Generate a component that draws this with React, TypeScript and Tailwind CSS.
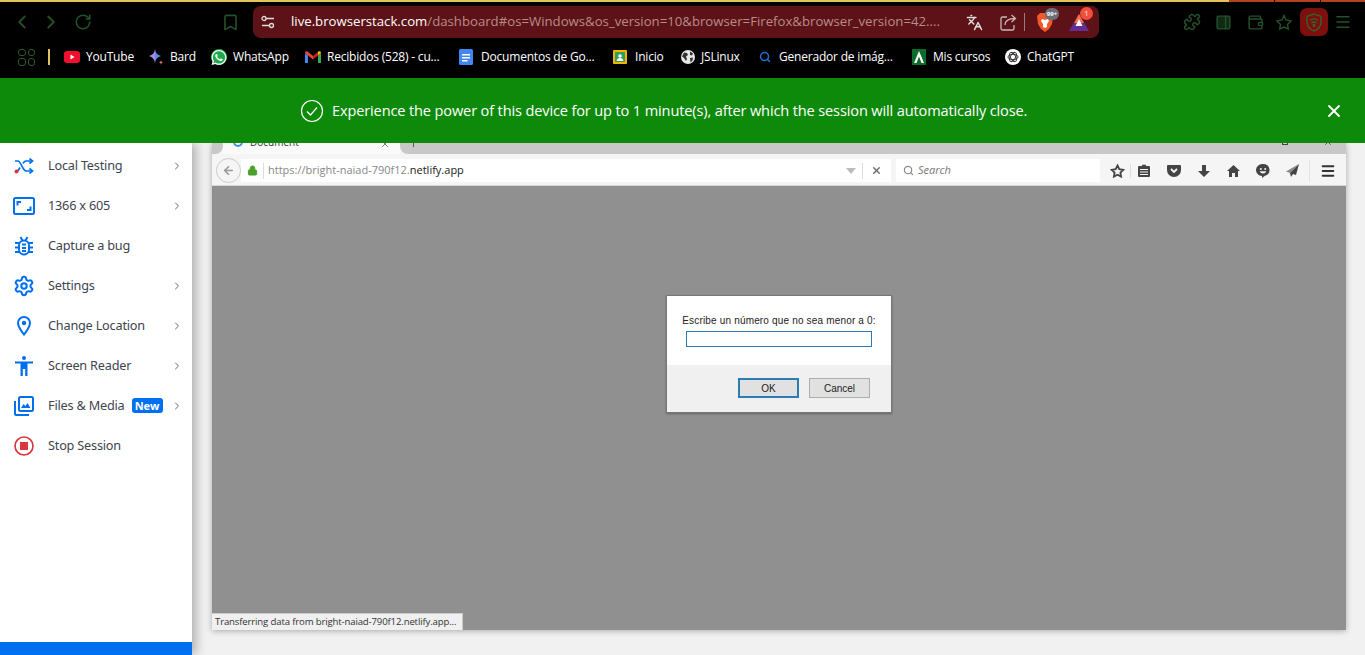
import { ChevronLeft, ChevronRight, RotateCw, Bookmark, Languages, Puzzle, PanelRight, Wallet, Menu, X, Settings, Lock, ArrowLeft, Search } from 'lucide-react'
import { FaWhatsapp } from 'react-icons/fa'

const dimGreen = '#24502a'
const blue = '#0070f0'
const tool = '#444'

function YouTubeIcon() {
  return (
    <svg width="16" height="16" viewBox="0 0 16 16">
      <rect x="0" y="2" width="16" height="12" rx="3" fill="#f00f2f" />
      <path d="M6.5 5.5v5l4-2.5z" fill="#fff" />
    </svg>
  )
}

function BardIcon() {
  return (
    <svg width="16" height="17" viewBox="0 0 16 17">
      <path d="M7 0c.6 4 2.4 6 6 7-3.6 1-5.4 3-6 7z" fill="#5b8de8" />
      <path d="M7 0c-.6 4-2.4 6-6 7 3.6 1 5.4 3 6 7z" fill="#a98ae0" />
      <path d="M13 11c.2 1.400.8 2 2 2.400-1.200.4-1.800 1-2 2.400-.2-1.400-.8-2-2-2.400 1.200-.4 1.800-1 2-2.400z" fill="#d96570" />
    </svg>
  )
}

function WhatsAppIcon() {
  return (
    <div className="w-[16px] h-[16px] rounded-full bg-[#1faa4c] flex items-center justify-center">
      <FaWhatsapp size={17} color="#fff" />
    </div>
  )
}

function GmailIcon() {
  return (
    <svg width="16" height="14" viewBox="0 0 16 14">
      <path d="M0 3v10h3V5.500z" fill="#4285f4" />
      <path d="M13 5.500V13h3V3z" fill="#34a853" />
      <path d="M0 3l3 2.500L8 9.500V6L3 1.800C1.600.8 0 1.500 0 3z" fill="#ea4335" />
      <path d="M8 6v3.500l5-4V1.800z" fill="#c5221f" />
      <path d="M13 1.800v3.700l3-2.500c0-1.500-1.600-2.200-3-1.200z" fill="#fbbc04" />
    </svg>
  )
}

function DocsIcon() {
  return (
    <svg width="14" height="16" viewBox="0 0 14 16">
      <rect width="14" height="16" rx="1.500" fill="#4285f4" />
      <path d="M3 5h8v1.500H3zM3 8h8v1.500H3zM3 11h5.500v1.500H3z" fill="#fff" />
    </svg>
  )
}

function ClassroomIcon() {
  return (
    <svg width="14" height="14" viewBox="0 0 14 14">
      <rect width="14" height="14" rx="1" fill="#f4b400" />
      <rect x="2" y="2" width="10" height="10" fill="#2f9e5b" />
      <circle cx="7" cy="6" r="1.800" fill="#fff" />
      <path d="M3.500 11c.4-2 1.800-3 3.500-3s3.100 1 3.500 3z" fill="#fff" />
    </svg>
  )
}

function GlobeIcon() {
  return (
    <svg width="14" height="14" viewBox="0 0 14 14">
      <circle cx="7" cy="7" r="7" fill="#e8e8e8" />
      <path d="M3 2.500l3 .5 1 2-2 1.500 1 2.500-1 2-2-3-2-1.500zM9 1.500l3 2-1 2-2-.5zM9 8l3-.5-.5 3-2 2z" fill="#333" />
    </svg>
  )
}

function CourseIcon() {
  return (
    <svg width="14" height="16" viewBox="0 0 14 16">
      <rect width="14" height="16" fill="#0d6b2c" />
      <path d="M7 2l5 12H9.500L7 7.500 4.500 14H2z" fill="#fff" />
    </svg>
  )
}

function ChatGptIcon() {
  return (
    <svg width="16" height="16" viewBox="0 0 16 16">
      <circle cx="8" cy="8" r="8" fill="#fff" />
      <g fill="none" stroke="#3a3a3a" strokeWidth="1">
        <ellipse cx="8" cy="8" rx="5" ry="2.600" />
        <ellipse cx="8" cy="8" rx="5" ry="2.600" transform="rotate(60 8 8)" />
        <ellipse cx="8" cy="8" rx="5" ry="2.600" transform="rotate(120 8 8)" />
      </g>
    </svg>
  )
}

function BraveIcon() {
  return (
    <svg width="16" height="19" viewBox="0 0 16 19">
      <path d="M3 0h10l3 3-1 8-3 5-4 3-4-3-3-5-1-8z" fill="#f1592a" />
      <path d="M5 6l3 1 3-1 1 2-2 3v3l-2 1-2-1v-3L4 8z" fill="#fff" />
    </svg>
  )
}

function RewardsIcon() {
  return (
    <svg width="20" height="17" viewBox="0 0 20 17">
      <path d="M10 0l10 17H0z" fill="#662d91" />
      <path d="M10 0l5 9H5z" fill="#ff6b4a" />
      <path d="M10 5l3.500 7h-7z" fill="#fff" />
    </svg>
  )
}

function TuneIcon() {
  return (
    <svg width="14" height="14" viewBox="0 0 14 14" fill="none" stroke="#ddd" strokeWidth="1.300">
      <circle cx="3" cy="3.500" r="2" />
      <path d="M5 3.500h8M1 10.500h7" />
      <circle cx="10.500" cy="10.500" r="2" />
    </svg>
  )
}

function ShareIcon() {
  return (
    <svg width="17" height="17" viewBox="0 0 17 17" fill="none" stroke="#c9b8b8" strokeWidth="1.300">
      <path d="M7 3H2.500A1.500 1.500 0 0 0 1 4.500v10A1.500 1.500 0 0 0 2.500 16h10a1.500 1.500 0 0 0 1.500-1.500V11" />
      <path d="M5 11c0-4 3-6.500 10-6.500M11.500 1L15.500 4.500L11.500 8" />
    </svg>
  )
}

function StarPlusIcon() {
  return (
    <svg width="17" height="17" viewBox="0 0 17 17" fill="none" stroke={dimGreen} strokeWidth="1.400">
      <path d="M8 1.500l2 4.500 5 1-3.500 3.500.8 4.500L8 13l-4.300 2 .8-4.500L1 7l5-1z" />
    </svg>
  )
}

function ShieldWifiIcon() {
  return (
    <svg width="16" height="19" viewBox="0 0 16 19" fill="none" stroke="#2f6a34" strokeWidth="1.300">
      <path d="M8 1l7 2.500V9c0 4-3 7.500-7 9-4-1.500-7-5-7-9V3.500z" />
      <path d="M4 7.500c2.400-2 5.600-2 8 0M5.500 10c1.500-1.200 3.500-1.200 5 0" />
      <circle cx="8" cy="12.500" r=".8" fill="#2f6a34" />
    </svg>
  )
}

function ScreenIcon() {
  return (
    <svg width="22" height="18" viewBox="0 0 22 18" fill="none" stroke={blue} strokeWidth="2">
      <rect x="1" y="1" width="20" height="16" rx="1.500" />
      <path d="M4.500 8.500V5H8M17.500 9.500V13H14" />
    </svg>
  )
}

function ShuffleDotIcon() {
  return (
    <svg width="20" height="16" viewBox="0 0 20 16" fill="none" stroke={blue} strokeWidth="1.700">
      <path d="M1 3h3c3 0 4.500 10 8 10h5M6 9.500C5 11.500 4.500 12.500 3.500 13" />
      <path d="M9 5.500C10 4 10.500 3 12 3h5" />
      <path d="M15.500.5L18.500 3l-3 2.500M15.500 10.500l3 2.500-3 2.500" />
      <circle cx="2.500" cy="13.500" r="2" fill="#d9363e" stroke="none" />
    </svg>
  )
}

function BugIcon() {
  return (
    <svg width="18" height="20" viewBox="0 0 18 20" fill="none" stroke={blue} strokeWidth="2">
      <rect x="4" y="4.500" width="10" height="14" rx="5" />
      <path d="M7 8.500h4M7 12h4M7 15h4M5.500 1l2 3.500M12.500 1l-2 3.500M0 7h4M14 7h4M0 11.500h4M14 11.500h4M0 16h4.500M13.500 16H18" />
    </svg>
  )
}

function PinIcon() {
  return (
    <svg width="14" height="20" viewBox="0 0 14 20" fill="none" stroke={blue} strokeWidth="2">
      <path d="M7 18.500C4 14.500 1 11 1 7a6 6 0 0 1 12 0c0 4-3 7.500-6 11.500z" />
      <circle cx="7" cy="7" r="2.200" fill={blue} stroke="none" />
    </svg>
  )
}

function PersonIcon() {
  return (
    <svg width="18" height="20" viewBox="0 0 18 20" fill={blue}>
      <circle cx="9" cy="2" r="2" />
      <path d="M0 5.500h18v2h-5.500V20h-2.300v-7H7.800v7H5.500V7.500H0z" />
    </svg>
  )
}

function MediaIcon() {
  return (
    <svg width="20" height="20" viewBox="0 0 20 20" fill="none" stroke={blue} strokeWidth="2">
      <rect x="5" y="1" width="14" height="14" rx="1.500" />
      <path d="M1 5v13a1 1 0 0 0 1 1h13" />
      <path d="M7 12l2.500-4 2 2 2-3 3 5z" fill={blue} stroke="none" />
    </svg>
  )
}

function StopIcon() {
  return (
    <svg width="20" height="20" viewBox="0 0 20 20">
      <circle cx="10" cy="10" r="9" fill="none" stroke="#d9363e" strokeWidth="1.700" />
      <rect x="6" y="6" width="8" height="8" fill="#d9363e" />
    </svg>
  )
}

function FxStar() {
  return (
    <svg width="15" height="14" viewBox="0 0 15 14" fill="none" stroke={tool} strokeWidth="1.800">
      <path d="M7.500 1.500l1.800 3.700 4 .6-2.900 2.800.7 4-3.600-1.900-3.600 1.900.7-4L1.700 5.800l4-.6z" />
    </svg>
  )
}

function FxClipboard() {
  return (
    <svg width="12" height="13" viewBox="0 0 12 13">
      <path d="M4 2V.8h4V2h3a1 1 0 0 1 1 1v9a1 1 0 0 1-1 1H1a1 1 0 0 1-1-1V3a1 1 0 0 1 1-1z" fill={tool} />
      <path d="M2 5h8v1H2zM2 7.500h8v1H2zM2 10h8v1H2z" fill="#f5f5f5" />
    </svg>
  )
}

function FxPocket() {
  return (
    <svg width="14" height="12" viewBox="0 0 14 12">
      <path d="M1 0h12a1 1 0 0 1 1 1v4A7 7 0 0 1 0 5V1a1 1 0 0 1 1-1z" fill={tool} />
      <path d="M4 4l3 3 3-3" fill="none" stroke="#f5f5f5" strokeWidth="1.800" />
    </svg>
  )
}

function FxDownload() {
  return (
    <svg width="12" height="12" viewBox="0 0 12 12">
      <path d="M4 0h4v6h4l-6 6-6-6h4z" fill={tool} />
    </svg>
  )
}

function FxHome() {
  return (
    <svg width="13" height="12" viewBox="0 0 13 12">
      <path d="M6.500 0L13 6h-2v6H8V8H5v4H2V6H0z" fill={tool} />
    </svg>
  )
}

function FxSmile() {
  return (
    <svg width="14" height="14" viewBox="0 0 14 14">
      <path d="M7 0a6.500 6 0 0 1 2 11.700L6 14v-2A6.500 6 0 0 1 7 0z" fill={tool} />
      <circle cx="4.800" cy="5" r="1" fill="#f5f5f5" />
      <circle cx="9.200" cy="5" r="1" fill="#f5f5f5" />
      <path d="M3.800 7.300h6.400c-.5 1.500-1.700 2.200-3.200 2.200s-2.700-.7-3.200-2.200z" fill="#f5f5f5" />
    </svg>
  )
}

function FxSend() {
  return (
    <svg width="13" height="13" viewBox="0 0 13 13">
      <path d="M13 0L0 7.500l4 1.500z" fill="#888" />
      <path d="M13 0L4 9l1 4 2-3 3 1z" fill={tool} />
    </svg>
  )
}

const bookmarks = [
  { label: 'YouTube', icon: <YouTubeIcon />, width: 'w-[84px]', gap: 'gap-[6px]' },
  { label: 'Bard', icon: <BardIcon />, width: 'w-[63px]', gap: 'gap-[6px]' },
  { label: 'WhatsApp', icon: <WhatsAppIcon />, width: 'w-[94px]', gap: 'gap-[6px]' },
  { label: 'Recibidos (528) - cu...', icon: <GmailIcon />, width: 'w-[154px]', gap: 'gap-[6px]' },
  { label: 'Documentos de Go...', icon: <DocsIcon />, width: 'w-[154px]', gap: 'gap-[8px]' },
  { label: 'Inicio', icon: <ClassroomIcon />, width: 'w-[68px]', gap: 'gap-[8px]' },
  { label: 'JSLinux', icon: <GlobeIcon />, width: 'w-[78px]', gap: 'gap-[6px]' },
  { label: 'Generador de imág...', icon: <Search size={12} color="#1a73d8" strokeWidth={3} />, width: 'w-[153px]', gap: 'gap-[8px]' },
  { label: 'Mis cursos', icon: <CourseIcon />, width: 'w-[93px]', gap: 'gap-[7px]' },
  { label: 'ChatGPT', icon: <ChatGptIcon />, width: 'w-[80px]', gap: 'gap-[6px]' },
]

const sidebarItems = [
  { label: 'Local Testing', icon: <ShuffleDotIcon />, arrow: true },
  { label: '1366 x 605', icon: <ScreenIcon />, arrow: true },
  { label: 'Capture a bug', icon: <BugIcon /> },
  { label: 'Settings', icon: <Settings size={22} color={blue} strokeWidth={2.200} />, arrow: true },
  { label: 'Change Location', icon: <PinIcon />, arrow: true },
  { label: 'Screen Reader', icon: <PersonIcon />, arrow: true },
  { label: 'Files & Media', icon: <MediaIcon />, arrow: true, badge: true },
  { label: 'Stop Session', icon: <StopIcon /> },
]

function BrowserChrome() {
  return (
    <div className="bg-black h-[78px] shrink-0 font-['Open_Sans',sans-serif]">
      <div className="h-[2px] flex">
        <div className="w-[1229px] bg-[#e2c25c]" />
        <div className="w-[45px] bg-[#b5421e] mr-px" />
        <div className="w-[45px] bg-[#b5421e] mr-px" />
        <div className="flex-1 bg-[#b5421e]" />
      </div>
      <div className="h-[36px] flex items-center pt-[4px]">
        <ChevronLeft size={22} color={dimGreen} className="ml-[11px]" />
        <ChevronRight size={22} color={dimGreen} className="ml-[7px]" />
        <RotateCw size={18} color={dimGreen} className="ml-[12px]" />
        <Bookmark size={19} color={dimGreen} className="ml-[129px]" />
        <div className="ml-[13px] w-[846px] h-[32px] rounded-[8px] bg-[#5c1216] flex items-center">
          <div className="ml-[8px]"><TuneIcon /></div>
          <div className="ml-[16px] w-[665px] text-[13.2px] whitespace-nowrap overflow-hidden text-[#b98c8c]">
            <span className="text-white">live.browserstack.com</span>/dashboard#os=Windows&os_version=10&browser=Firefox&browser_version=42....
          </div>
          <Languages size={17} color="#ddd" className="ml-[10px]" />
          <div className="ml-[17px]"><ShareIcon /></div>
          <div className="ml-[7px] w-px h-[18px] bg-[#9c7b7b]" />
          <div className="relative ml-[12px]">
            <BraveIcon />
            <span className="absolute -top-[5px] left-[8px] w-[14px] h-[12px] rounded-full bg-[#6b6f78] text-white text-[6px] font-bold leading-[12px] text-center">99+</span>
          </div>
          <div className="relative ml-[16px]">
            <RewardsIcon />
            <span className="absolute -top-[7px] left-[11px] w-[13px] h-[13px] rounded-full bg-[#f0503c] text-white text-[7px] leading-[13px] text-center">1</span>
          </div>
        </div>
        <Puzzle size={18} color={dimGreen} className="ml-[84px]" />
        <PanelRight size={17} color={dimGreen} fill="#0f2a14" className="ml-[14px]" />
        <Wallet size={17} color={dimGreen} className="ml-[15px]" />
        <div className="ml-[12px]"><StarPlusIcon /></div>
        <div className="ml-[7px] w-[28px] h-[28px] rounded-[7px] bg-[#7d0f0c] flex items-center justify-center">
          <ShieldWifiIcon />
        </div>
        <Menu size={18} color={dimGreen} className="ml-[6px]" />
      </div>
      <div className="h-[24px] mt-[7px] flex items-center text-[12px] tracking-[-0.2px] text-white whitespace-nowrap">
        <div className="ml-[18px] w-[17px] h-[17px] grid grid-cols-2 gap-[2px]">
          <div className="border border-[#2c5a30] rounded-[3px]" />
          <div className="border border-[#2c5a30] rounded-[3px]" />
          <div className="border border-[#2c5a30] rounded-[3px]" />
          <div className="border border-[#2c5a30] rounded-[3px]" />
        </div>
        <div className="ml-[13px] mr-[14px] w-[2px] h-[16px] bg-[#e2c25c]" />
        {bookmarks.map((b) => (
          <div key={b.label} className={`flex items-center ${b.width} ${b.gap}`}>
            {b.icon}
            <span>{b.label}</span>
          </div>
        ))}
      </div>
    </div>
  )
}

function Sidebar() {
  return (
    <aside className="relative w-[192px] shrink-0 bg-white shadow-[4px_0_10px_rgba(0,0,0,0.28)] flex flex-col pt-[3px] font-['Noto_Sans',sans-serif] text-[12.7px] tracking-[-0.2px] text-[#3d4450]">
      {sidebarItems.map((item) => (
        <div key={item.label} className="h-[40px] flex items-center shrink-0">
          <div className="w-[48px] flex items-center justify-center">{item.icon}</div>
          <span>{item.label}</span>
          {item.badge && (
            <span className="ml-[7px] -mt-[1px] w-[31px] h-[15px] rounded-[3px] bg-[#0070f0] text-white text-[11px] tracking-normal font-bold leading-[15px] text-center">New</span>
          )}
          {item.arrow && <ChevronRight size={12} color="#666" strokeWidth={2} className="absolute left-[171px] -mt-[1px]" />}
        </div>
      ))}
      <div className="mt-auto h-[13px] bg-[#0070f0]" />
    </aside>
  )
}

function FirefoxToolbar() {
  return (
    <div className="font-['Open_Sans',sans-serif]">
      <div className="h-[11px] bg-[#f5f5f5] flex overflow-hidden text-[10px] leading-[10px] text-[#333]">
        <div className="w-[11px] bg-[#c8c8c8] rounded-br-[8px]" />
        <div className="relative w-[177px] bg-[#fafafa]">
          <div className="flex items-center -mt-[6px]">
            <span className="ml-[10px] w-[10px] h-[10px] rounded-full border-2 border-[#4a90d9]" />
            <span className="ml-[7px]">Document</span>
            <X size={10} color="#666" className="absolute left-[157px] -top-[4px]" />
          </div>
        </div>
        <div className="flex-1 bg-[#c8c8c8] rounded-bl-[8px] flex items-start">
          <div className="ml-[13px] w-px h-[4px] bg-[#555]" />
          <div className="ml-auto w-[6px] h-[2px] border-b border-x border-[#444]" />
          <X size={10} color="#444" className="ml-[35px] mr-[13px] -mt-[6px]" />
        </div>
      </div>
      <div className="h-[32px] pt-[2px] bg-[#f5f5f5] border-b border-[#d8d8d8] flex items-center">
        <div className="ml-[4px] w-[25px] h-[25px] rounded-full border border-[#ccc] bg-[#f5f5f5] flex items-center justify-center">
          <ArrowLeft size={13} color="#999" strokeWidth={3} />
        </div>
        <div className="w-[650px] h-[23px] bg-white flex items-center">
          <Lock size={11} color="#4aa02c" fill="#4aa02c" className="ml-[6px]" />
          <div className="ml-[5px] w-px h-[16px] bg-[#ddd]" />
          <span className="ml-[4px] text-[11px] text-[#888] whitespace-nowrap">https://bright-naiad-790f12.<span className="text-[#222]">netlify.app</span></span>
          <span className="ml-auto w-0 h-0 border-x-[5px] border-x-transparent border-t-[6px] border-t-[#bbb]" />
          <div className="ml-[6px] w-px h-[16px] bg-[#ddd]" />
          <X size={11} color="#666" strokeWidth={3} className="ml-[8px] mr-[9px]" />
        </div>
        <div className="ml-[5px] w-[204px] h-[23px] bg-white flex items-center">
          <Search size={11} color="#888" strokeWidth={2.500} className="ml-[7px]" />
          <span className="ml-[4px] text-[11px] italic text-[#777]">Search</span>
        </div>
        <div className="ml-[10px]"><FxStar /></div>
        <div className="ml-[5px] w-px h-[14px] bg-[#ddd]" />
        <div className="ml-[7px]"><FxClipboard /></div>
        <div className="ml-[17px]"><FxPocket /></div>
        <div className="ml-[17px]"><FxDownload /></div>
        <div className="ml-[17px]"><FxHome /></div>
        <div className="ml-[16px]"><FxSmile /></div>
        <div className="ml-[16px]"><FxSend /></div>
        <div className="ml-[10px] w-px h-[22px] bg-[#e4e4e4]" />
        <Menu size={16} color="#333" strokeWidth={3} className="ml-[10px]" />
      </div>
    </div>
  )
}

function PromptDialog() {
  return (
    <div className="w-[226px] h-[118px] border border-[#777] bg-white shadow-[0_1px_2px_rgba(0,0,0,0.3)] font-['Liberation_Sans',sans-serif] text-[10px] text-[#222] flex flex-col">
      <div className="h-[69px] flex flex-col items-center pt-[19px]">
        <span className="leading-[12px] tracking-[0.17px] whitespace-nowrap">Escribe un número que no sea menor a 0:</span>
        <div className="mt-[4px] w-[186px] h-[16px] border border-[#2b7cb3] bg-white" />
      </div>
      <div className="flex-1 bg-[#f0f0f0] flex items-start pt-[13px] pl-[71px] gap-[10px]">
        <div className="w-[61px] h-[20px] bg-[#e1e1e1] border-2 border-[#2b7cb3] flex items-center justify-center">OK</div>
        <div className="w-[61px] h-[20px] bg-[#e1e1e1] border border-[#adadad] flex items-center justify-center">Cancel</div>
      </div>
    </div>
  )
}

export default function App() {
  return (
    <div className="h-[655px] w-[1365px] overflow-hidden flex flex-col bg-[#f1f1f1]">
      <BrowserChrome />
      <div className="h-[65px] shrink-0 bg-[#0d8a0a] flex items-center text-white font-['Open_Sans',sans-serif] text-[14.6px] tracking-[-0.15px] z-10">
        <svg width="24" height="24" viewBox="0 0 24 24" fill="none" stroke="#fff" strokeWidth="1.200" className="ml-[300px]">
          <circle cx="12" cy="12" r="10.500" />
          <path d="M7 12.500l3.500 3.500L17 8.500" />
        </svg>
        <span className="ml-[8px] whitespace-nowrap">Experience the power of this device for up to 1 minute(s), after which the session will automatically close.</span>
        <X size={20} color="#fff" strokeWidth={2.200} className="ml-auto mr-[21px]" />
      </div>
      <div className="flex-1 flex min-h-0">
        <Sidebar />
        <div className="flex-1 pl-[20px]">
          <div className="relative w-[1134px] h-[487px] flex flex-col shadow-[0_1px_6px_rgba(0,0,0,0.3)]">
            <FirefoxToolbar />
            <div className="flex-1 bg-[#8f908f] flex justify-start pt-[109px] pl-[454px]">
              <PromptDialog />
            </div>
            <div className="absolute left-0 bottom-0 w-[251px] h-[17px] bg-[#f0f0f0] border-t border-r border-[#ccc] font-['Open_Sans',sans-serif] text-[9.6px] tracking-[-0.15px] leading-[16px] text-[#333] pl-[3px] whitespace-nowrap">
              Transferring data from bright-naiad-790f12.netlify.app...
            </div>
          </div>
        </div>
      </div>
    </div>
  )
}
